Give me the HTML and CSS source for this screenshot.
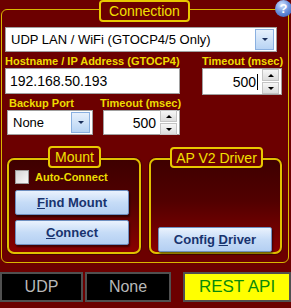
FILE: index.html
```html
<!DOCTYPE html>
<html lang="en">
<head>
  <meta charset="UTF-8" />
  <title>Connection</title>
  <link rel="stylesheet" href="styles.css">
</head>
<body>
  <div class="help">?</div>

  <div class="panel">
    <div class="title title-main">Connection</div>

    <div class="combo combo-main">
      <span class="combo-text">UDP LAN / WiFi (GTOCP4/5 Only)</span>
      <span class="combo-btn"><span class="arrow"></span></span>
    </div>

    <div class="row row-host">
      <div class="field field-ip">
        <label class="lbl">Hostname / IP Address (GTOCP4)</label>
        <div class="textbox ip">192.168.50.193</div>
      </div>
      <div class="field field-timeout">
        <label class="lbl">Timeout (msec)</label>
        <div class="spin spin-main">
          <div class="spin-value">500<span class="caret"></span></div>
          <div class="spin-btns">
            <span class="spin-btn"><span class="up"></span></span>
            <span class="spin-btn"><span class="down"></span></span>
          </div>
        </div>
      </div>
    </div>

    <div class="row row-backup">
      <div class="field field-backup">
        <label class="lbl">Backup Port</label>
        <div class="combo combo-backup">
          <span class="combo-text">None</span>
          <span class="combo-btn"><span class="arrow"></span></span>
        </div>
      </div>
      <div class="field field-timeout2">
        <label class="lbl">Timeout (msec)</label>
        <div class="spin spin-small">
          <div class="spin-value">500</div>
          <div class="spin-btns">
            <span class="spin-btn"><span class="up"></span></span>
            <span class="spin-btn"><span class="down"></span></span>
          </div>
        </div>
      </div>
    </div>

    <div class="groups">
      <div class="group group-mount">
        <div class="title title-mount">Mount</div>
        <label class="check">
          <span class="box"></span>
          <span>Auto-Connect</span>
        </label>
        <button class="btn"><u>F</u>ind Mount</button>
        <button class="btn"><u>C</u>onnect</button>
      </div>
      <div class="group group-driver">
        <div class="title title-driver">AP V2 Driver</div>
        <button class="btn">Config <u>D</u>river</button>
      </div>
    </div>
  </div>

  <div class="status">
    <div class="stat stat-udp">UDP</div>
    <div class="stat stat-none">None</div>
    <div class="stat stat-api">REST API</div>
  </div>
</body>
</html>
```

FILE: styles.css
```css
body {
  margin: 0;
  width: 291px;
  height: 308px;
  background: #6c0000;
  font-family: "DejaVu Sans", Tahoma, sans-serif;
  position: relative;
  overflow: hidden;
}

.help {
  position: absolute;
  top: 0;
  left: 275px;
  width: 17px;
  height: 17px;
  border-radius: 50%;
  background: radial-gradient(circle at 40% 30%, #d8e6ff 0%, #6f96e0 45%, #2a55b8 100%);
  color: #fff;
  font: bold 13px/17px "Liberation Sans", sans-serif;
  text-align: center;
  z-index: 2;
}

.panel {
  position: relative;
  box-sizing: border-box;
  margin: 9px 2px 0 1px;
  height: 254px;
  border: 1px solid #d9b800;
  border-radius: 6px;
  padding: 17px 0 0 3px;
}

.title {
  position: absolute;
  background: #6c0000;
  border: 2px solid #e8c800;
  border-radius: 4px;
  color: #f2e000;
  font: 14px/18px "Liberation Sans", sans-serif;
  text-align: center;
}

.title-main {
  top: -10px;
  left: 97px;
  width: 87px;
  height: 18px;
}

/* combo boxes */
.combo {
  display: flex;
  align-items: center;
  background: #fff;
  border: 1px solid #a0a0a0;
  box-sizing: border-box;
  padding: 2px;
}

.combo-text {
  flex: 1;
  padding-left: 3px;
  color: #000;
  font: 13px "Liberation Sans", sans-serif;
}

.combo-btn {
  width: 17px;
  height: 19px;
  border: 1px solid #8ab0e0;
  background: linear-gradient(#e6f0fc, #b8d4f4);
  display: flex;
  align-items: center;
  justify-content: center;
}

.arrow {
  width: 0;
  height: 0;
  border-left: 3px solid transparent;
  border-right: 3px solid transparent;
  border-top: 3px solid #1a2f5c;
}

.combo-main {
  width: 272px;
  height: 25px;
}

/* rows */
.row {
  display: flex;
}

.field {
  display: flex;
  flex-direction: column;
}

.lbl {
  color: #eedc00;
  font: bold 11px/14px "Liberation Sans", sans-serif;
  white-space: nowrap;
}

.row-host {
  margin-top: 2px;
}

.field-ip {
  width: 175px;
}

.field-timeout {
  margin-left: 22px;
  width: 80px;
}

.textbox {
  height: 26px;
  box-sizing: border-box;
  background: #fff;
  border: 1px solid #a0a0a0;
  padding: 0 4px;
  font: 14px/24px "Liberation Sans", sans-serif;
  color: #000;
}

.spin {
  display: flex;
  align-items: center;
  background: #fff;
  border: 1px solid #a0a0a0;
  box-sizing: border-box;
  padding: 2px;
}

.spin-main {
  height: 27px;
  width: 80px;
}

.spin-value {
  flex: 1;
  text-align: right;
  padding-right: 4px;
  font: 14px "Liberation Sans", sans-serif;
  color: #000;
  display: flex;
  justify-content: flex-end;
  align-items: center;
}

.caret {
  display: inline-block;
  width: 1px;
  height: 16px;
  background: #000;
  margin-left: 1px;
}

.spin-btns {
  width: 17px;
  display: flex;
  flex-direction: column;
  gap: 1px;
}

.spin-btn {
  height: 10px;
  border: 1px solid #c4c4c4;
  background: linear-gradient(#f6f6f6, #dcdcdc);
  display: flex;
  align-items: center;
  justify-content: center;
}

.up, .down {
  width: 0;
  height: 0;
  border-left: 3px solid transparent;
  border-right: 3px solid transparent;
}

.up {
  border-bottom: 3px solid #000;
}

.down {
  border-top: 3px solid #000;
}

.row-backup {
  margin-top: 1px;
}

.field-backup {
  margin-left: 2px;
  width: 86px;
}

.field-backup .lbl {
  padding-left: 2px;
}

.combo-backup {
  height: 25px;
  width: 86px;
}

.field-timeout2 {
  margin-left: 10px;
  width: 78px;
}

.field-timeout2 .lbl {
  margin-left: -3px;
}

.spin-small {
  height: 25px;
  width: 77px;
}

/* groups */
.groups {
  display: flex;
  margin-top: 23px;
  margin-left: 2px;
  gap: 8px;
}

.group {
  position: relative;
  height: 96px;
  box-sizing: border-box;
  border: 2px solid #e0c000;
  border-radius: 7px;
  background: linear-gradient(#3e0000, #520000 45%, #8a0000);
  box-shadow: 0 0 0 1px #4a0000;
  display: flex;
  flex-direction: column;
}

.group-mount {
  width: 134px;
  padding: 10px 0 0 6px;
}

.group-driver {
  width: 133px;
  padding: 61px 0 0 7px;
}

.title-mount {
  top: -14px;
  left: 39px;
  width: 49px;
  height: 18px;
}

.title-driver {
  top: -13px;
  left: 19px;
  width: 89px;
  height: 17px;
}

.check {
  display: flex;
  align-items: center;
  gap: 6px;
  color: #eedc00;
  font: bold 11px "Liberation Sans", sans-serif;
  height: 14px;
}

.box {
  width: 12px;
  height: 12px;
  border: 1px solid #9a9a9a;
  background: linear-gradient(135deg, #d4d4d4, #f8f8f8);
}

.btn {
  width: 114px;
  height: 25px;
  margin-top: 6px;
  border: 1px solid #6e8fc0;
  border-radius: 2px;
  background: linear-gradient(#eaf2fd, #c6dcf7 50%, #b4cff2);
  color: #18336e;
  font: bold 13px "Liberation Sans", sans-serif;
  padding: 0;
  box-shadow: 1px 2px 2px rgba(0, 0, 0, 0.5);
}

.btn + .btn {
  margin-top: 5px;
}

/* status bar */
.status {
  display: flex;
  margin-top: 9px;
}

.stat {
  height: 30px;
  box-sizing: border-box;
  border: 2px solid #505050;
  background: #000;
  color: #b8b8b8;
  font: 16px/26px "Liberation Sans", sans-serif;
  text-align: center;
}

.stat-udp {
  width: 83px;
}

.stat-none {
  width: 86px;
  margin-left: 2px;
}

.stat-api {
  flex: 1;
  margin-left: 12px;
  background: #ffff00;
  color: #0a8a0a;
  border-color: #505050;
  font-size: 17px;
}
```
